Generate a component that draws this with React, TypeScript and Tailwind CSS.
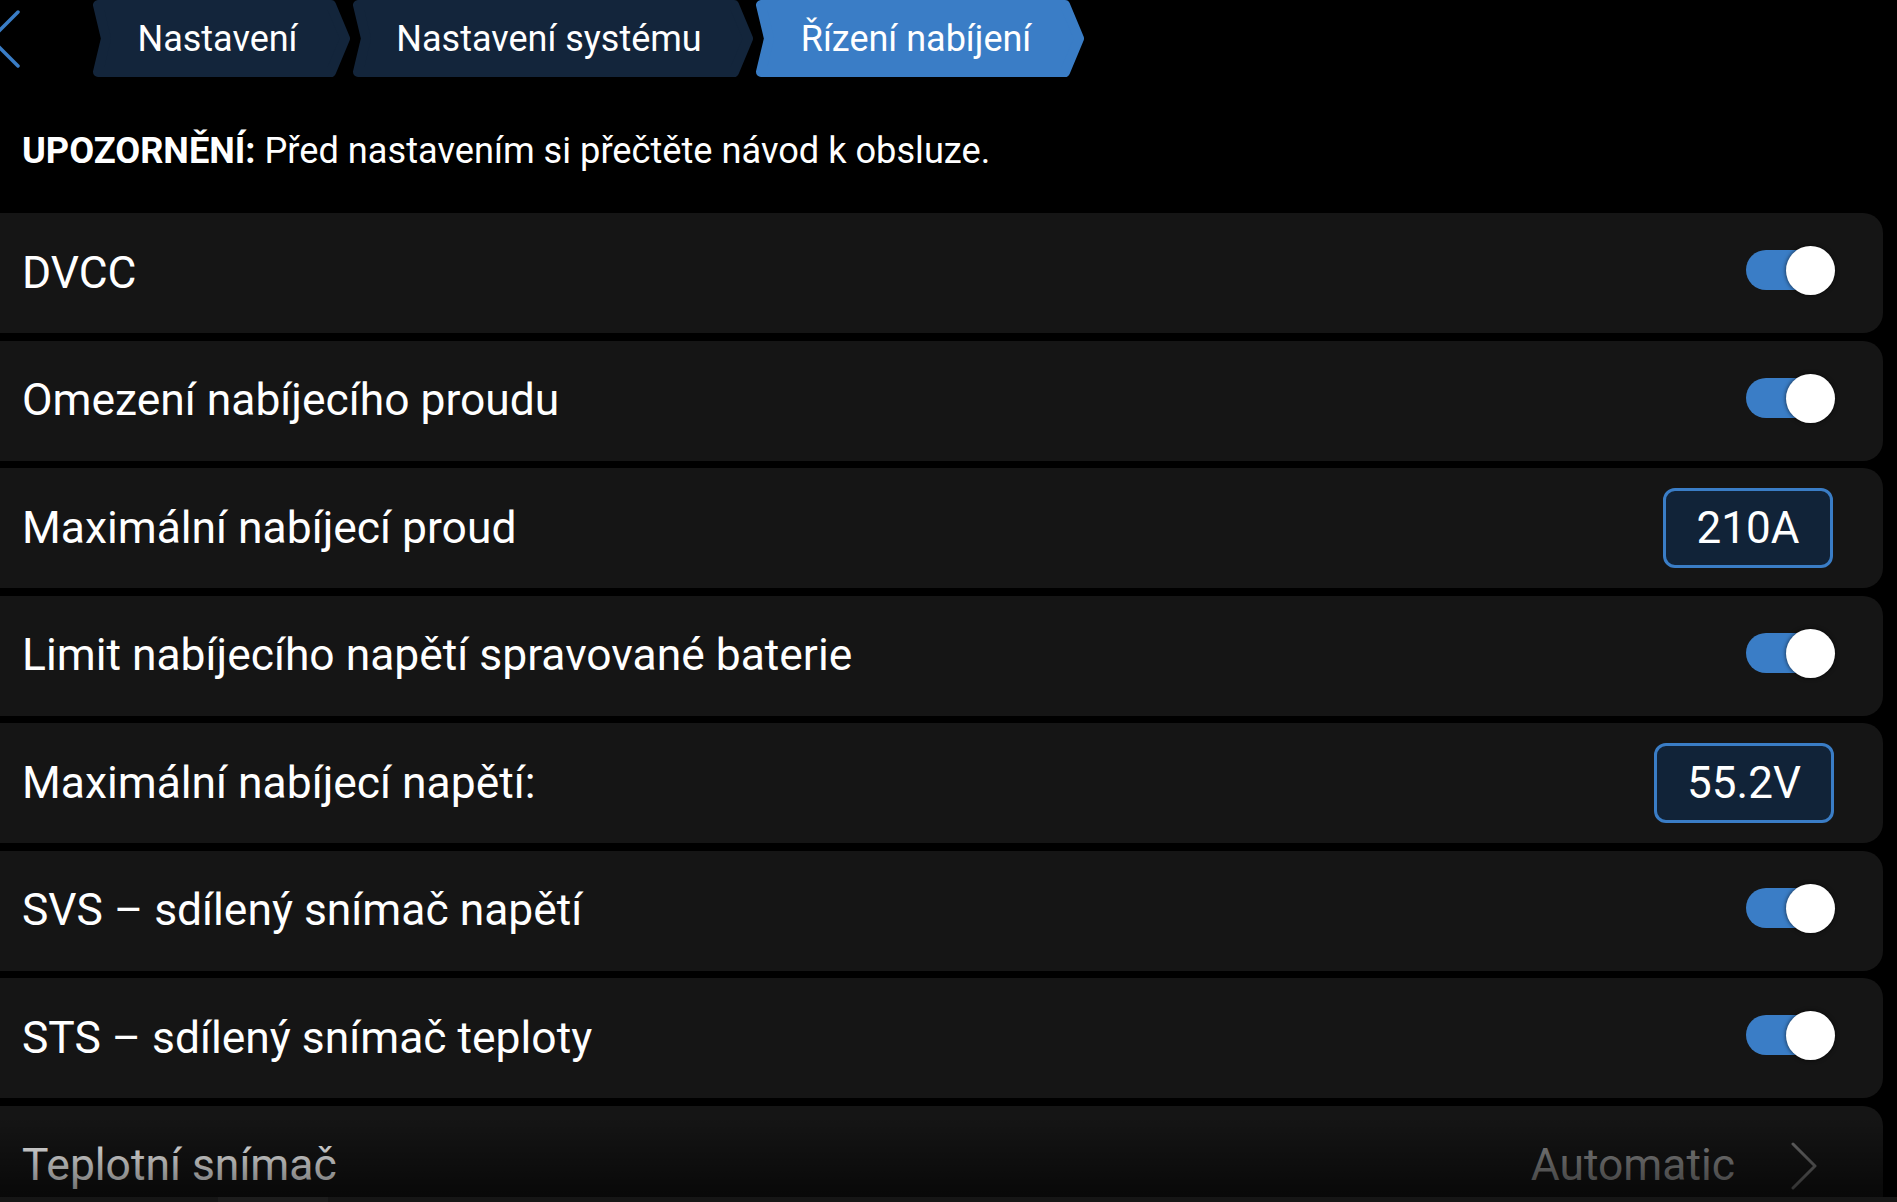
import React from "react";

function Crumb({ w, label, active }: { w: number; label: string; active?: boolean }) {
  const h = 77;
  const i = 5; // inset for rounded stroke
  const fill = active ? "#3a7dc6" : "#13253b";
  const pts = [
    [i, i],
    [w - 16 - i * 0.6, i],
    [w - i, h / 2],
    [w - 16 - i * 0.6, h - i],
    [i, h - i],
    [10 + i * 0.6, h / 2],
  ]
    .map((p) => p.join(","))
    .join(" ");
  return (
    <div className="relative h-[77px] flex items-center justify-center shrink-0" style={{ width: w }}>
      <svg className="absolute inset-0" width={w} height={h} viewBox={`0 0 ${w} ${h}`}>
        <polygon points={pts} fill={fill} stroke={fill} strokeWidth={10} strokeLinejoin="round" />
      </svg>
      <span className="relative text-white text-[36px] leading-none pr-[8px]">{label}</span>
    </div>
  );
}

function Toggle() {
  return (
    <div className="relative w-[89px] h-[49px] shrink-0 mb-[5px]">
      <div className="absolute left-0 top-[4px] w-[84px] h-[40px] rounded-full bg-[#3a7dc6]" />
      <div className="absolute right-0 top-0 w-[49px] h-[49px] rounded-full bg-white shadow-[0_0_4px_rgba(0,0,0,0.7)]" />
    </div>
  );
}

function ValueBox({ value, w }: { value: string; w: number }) {
  return (
    <div
      className="h-[80px] rounded-[12px] border-[3px] border-[#3a7dc6] bg-[#112338] flex items-center justify-center text-white text-[44px] leading-none shrink-0"
      style={{ width: w }}
    >
      {value}
    </div>
  );
}

function Row({ label, children, pr = "pr-[48px]" }: { label: string; children: React.ReactNode; pr?: string }) {
  return (
    <div className={`h-[120px] w-[1883px] shrink-0 rounded-r-[20px] bg-[#151515] flex items-center justify-between pl-[22px] ${pr}`}>
      <span className="text-white text-[44.4px] leading-none">{label}</span>
      {children}
    </div>
  );
}

export default function App() {
  return (
    <div className="w-[1897px] h-[1202px] bg-black overflow-hidden font-[Roboto] flex flex-col">
      <div className="h-[1197px] overflow-hidden relative flex flex-col">
        {/* Header / breadcrumbs */}
        <div className="h-[77px] flex items-center shrink-0">
          <div className="w-[93px] h-[77px] shrink-0">
            <svg width="30" height="77" viewBox="0 0 30 77">
              <polyline points="18,12 -9,39 18,66" fill="none" stroke="#3a7dc6" strokeWidth="3.5" strokeLinecap="round" strokeLinejoin="round" />
            </svg>
          </div>
          <div className="flex gap-[3px]">
            <Crumb w={257} label="Nastavení" />
            <Crumb w={400} label="Nastavení systému" />
            <Crumb w={328} label="Řízení nabíjení" active />
          </div>
        </div>

        {/* Warning */}
        <div className="h-[136px] shrink-0 pl-[22px] pt-[56px] text-white text-[36.2px] leading-none">
          <span className="font-bold">UPOZORNĚNÍ:</span> Před nastavením si přečtěte návod k obsluze.
        </div>

        {/* Rows */}
        <div className="flex flex-col gap-[7.5px]">
          <Row label="DVCC">
            <Toggle />
          </Row>
          <Row label="Omezení nabíjecího proudu">
            <Toggle />
          </Row>
          <Row label="Maximální nabíjecí proud" pr="pr-[50px]">
            <ValueBox value="210A" w={170} />
          </Row>
          <Row label="Limit nabíjecího napětí spravované baterie">
            <Toggle />
          </Row>
          <Row label="Maximální nabíjecí napětí:" pr="pr-[49px]">
            <ValueBox value="55.2V" w={180} />
          </Row>
          <Row label="SVS – sdílený snímač napětí">
            <Toggle />
          </Row>
          <Row label="STS – sdílený snímač teploty">
            <Toggle />
          </Row>
          <Row label="Teplotní snímač" pr="pr-[66px]">
            <div className="flex items-center gap-[56px]">
              <span className="text-[#8c8c8c] text-[44.4px] leading-none">Automatic</span>
              <svg width="26" height="48" viewBox="0 0 26 48">
                <polyline points="2,2 24,24 2,46" fill="none" stroke="#6e6e6e" strokeWidth="3" strokeLinecap="round" strokeLinejoin="round" />
              </svg>
            </div>
          </Row>
        </div>

        {/* bottom fade */}
        <div className="absolute left-0 right-0 bottom-0 h-[80px] bg-gradient-to-b from-transparent to-[rgba(0,0,0,0.6)] pointer-events-none" />
      </div>
      <div className="h-[5px] bg-[#161616] flex">
        <div className="ml-[218px] w-[110px] h-[5px] bg-[#1d1d1d]" />
      </div>
    </div>
  );
}
